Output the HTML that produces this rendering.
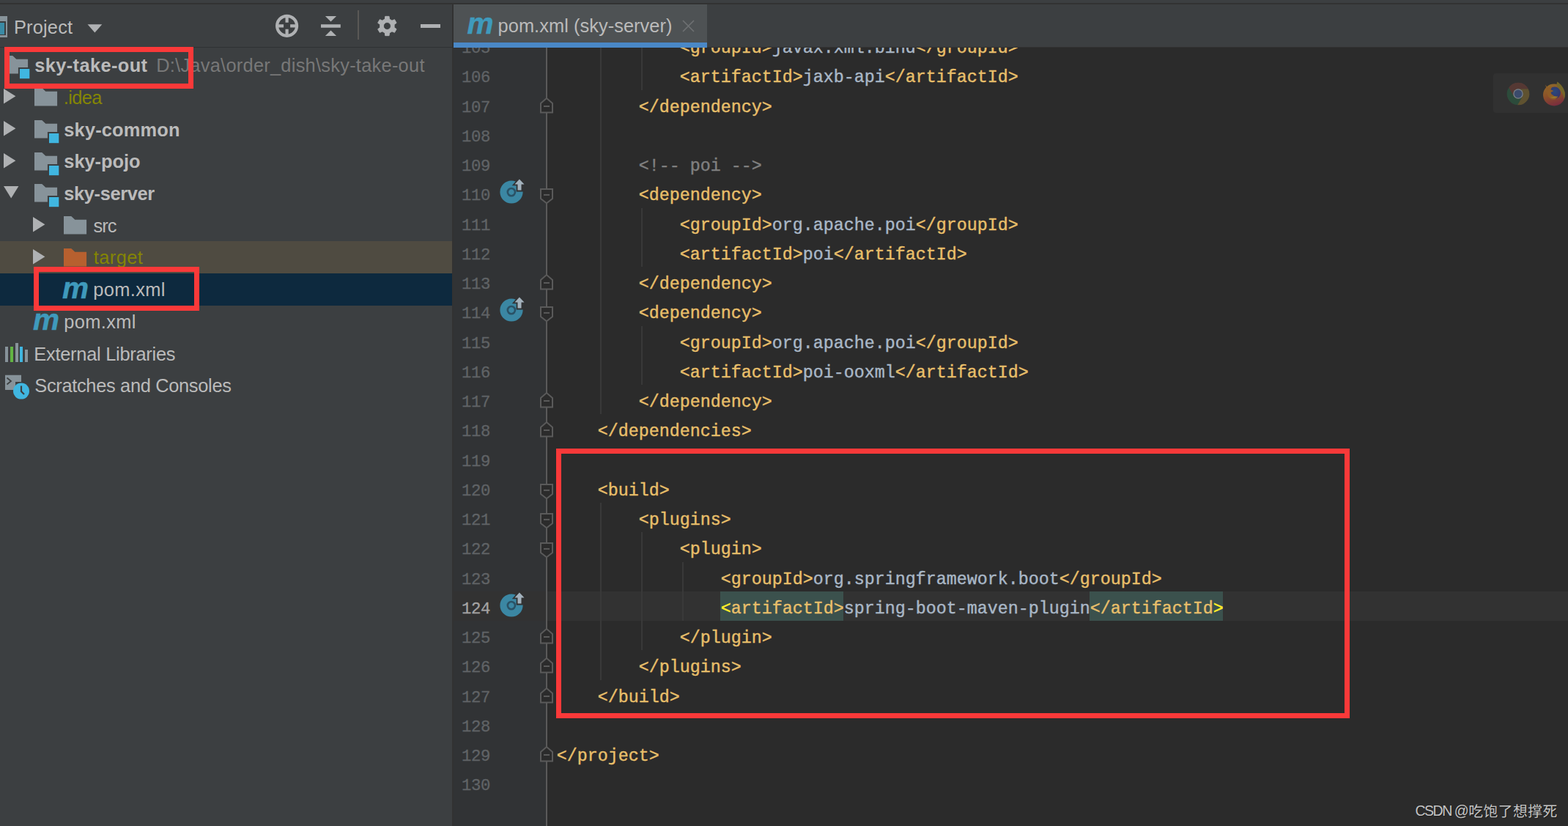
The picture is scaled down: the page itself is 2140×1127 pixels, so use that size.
<!DOCTYPE html>
<html lang="en"><head><meta charset="utf-8"><title>pom.xml (sky-server)</title>
<style>
*{margin:0;padding:0;box-sizing:border-box}
html,body{width:2140px;height:1127px;overflow:hidden;background:#2b2b2b}
body{position:relative;font-family:"Liberation Sans","Noto Sans CJK SC",sans-serif;color:#bbbbbb}
.abs{position:absolute}
#side{position:absolute;left:0;top:0;width:617px;height:1127px;background:#3c3f41;overflow:hidden}
#sepv{position:absolute;left:617.2px;top:6px;width:1.7px;height:1121px;background:#323232}
#topstrip{position:absolute;left:0;top:0;width:2140px;height:6px;background:#3c3f41}
#topline{position:absolute;left:0;top:4.1px;width:2140px;height:1.9px;background:#323232}
#tabbar{position:absolute;left:619px;top:6px;width:1521px;height:58px;background:#3c3f41}
#tabline{position:absolute;left:619px;top:63.6px;width:1521px;height:1.6px;background:#323232}
#tab{position:absolute;left:619px;top:6px;width:346px;height:59px;background:#4e5254}
#tabul{position:absolute;left:619px;top:58px;width:346px;height:7px;background:#4a88c7}
#hdrline{position:absolute;left:0;top:63.6px;width:617.5px;height:1.5px;background:#2f3133}
#gutter{position:absolute;left:619px;top:65px;width:128px;height:1062px;background:#313335}
#foldline{position:absolute;left:745px;top:65px;width:2px;height:1062px;background:#5a5a5a}
#editor{position:absolute;left:619px;top:65px;width:1521px;height:1062px;overflow:hidden}
.ln{position:absolute;left:12px;width:40px;text-align:left;font-family:"Liberation Mono", monospace;font-size:22.3px;letter-spacing:-0.4px;color:#606366;-webkit-text-stroke:0.3px currentColor;line-height:40.25px;height:40.25px;white-space:pre}
.cl{position:absolute;-webkit-text-stroke:0.4px currentColor;font-family:"Liberation Mono", monospace;font-size:23.33px;line-height:40.25px;height:40.25px;white-space:pre;color:#a9b7c6}
.t{color:#e8bf6a}.c{color:#808080}
.m{color:#e8bf6a}
.y{color:#ffef28}
.ig{position:absolute;width:2px;background:#393939}
.row{position:absolute;left:0;width:617px;height:43.8px}
.rt{position:absolute;font-size:25.4px;line-height:30px;white-space:pre;color:#bbbbbb}
.b{font-weight:bold}
.ol{color:#848504}
.gr{color:#787878}
.red{position:absolute;border:7px solid #fa3939}
svg{position:absolute;overflow:visible}
</style></head><body>

<div id="editor">
<div class="abs" style="left:0;top:742.00px;width:1521px;height:40px;background:#323232"></div>
<div class="abs" style="left:363.80px;top:742.00px;width:168.00px;height:40px;background:#3b514d"></div>
<div class="abs" style="left:867.80px;top:742.00px;width:182.00px;height:40px;background:#3b514d"></div>
</div>
<div id="gutter"></div>
<div class="abs" style="left:619px;top:807.00px;width:128px;height:40px;background:#323232"></div>
<div id="foldline"></div>
<div class="ig" style="left:819.0px;top:65.0px;height:500.0px"></div>
<div class="ig" style="left:875.0px;top:65.0px;height:58.0px"></div>
<div class="ig" style="left:875.0px;top:284.0px;height:80.0px"></div>
<div class="ig" style="left:875.0px;top:445.0px;height:80.0px"></div>
<div class="ig" style="left:819.0px;top:686.0px;height:242.0px"></div>
<div class="ig" style="left:875.0px;top:726.0px;height:161.0px"></div>
<div class="ig" style="left:931.0px;top:767.0px;height:80.0px"></div>
<div class="ln" style="left:630px;top:46.00px;">105</div>
<div class="cl" style="left:927.70px;top:46.00px"><span class="t">&lt;groupId&gt;</span>javax.xml.bind<span class="t">&lt;/groupId&gt;</span></div>
<div class="ln" style="left:630px;top:86.00px;">106</div>
<div class="cl" style="left:927.70px;top:86.00px"><span class="t">&lt;artifactId&gt;</span>jaxb-api<span class="t">&lt;/artifactId&gt;</span></div>
<div class="ln" style="left:630px;top:127.00px;">107</div>
<div class="cl" style="left:871.70px;top:127.00px"><span class="t">&lt;/dependency&gt;</span></div>
<div class="ln" style="left:630px;top:167.00px;">108</div>
<div class="ln" style="left:630px;top:207.00px;">109</div>
<div class="cl" style="left:871.70px;top:207.00px"><span class="c">&lt;!-- poi --&gt;</span></div>
<div class="ln" style="left:630px;top:247.00px;">110</div>
<div class="cl" style="left:871.70px;top:247.00px"><span class="t">&lt;dependency&gt;</span></div>
<div class="ln" style="left:630px;top:288.00px;">111</div>
<div class="cl" style="left:927.70px;top:288.00px"><span class="t">&lt;groupId&gt;</span>org.apache.poi<span class="t">&lt;/groupId&gt;</span></div>
<div class="ln" style="left:630px;top:328.00px;">112</div>
<div class="cl" style="left:927.70px;top:328.00px"><span class="t">&lt;artifactId&gt;</span>poi<span class="t">&lt;/artifactId&gt;</span></div>
<div class="ln" style="left:630px;top:368.00px;">113</div>
<div class="cl" style="left:871.70px;top:368.00px"><span class="t">&lt;/dependency&gt;</span></div>
<div class="ln" style="left:630px;top:408.00px;">114</div>
<div class="cl" style="left:871.70px;top:408.00px"><span class="t">&lt;dependency&gt;</span></div>
<div class="ln" style="left:630px;top:449.00px;">115</div>
<div class="cl" style="left:927.70px;top:449.00px"><span class="t">&lt;groupId&gt;</span>org.apache.poi<span class="t">&lt;/groupId&gt;</span></div>
<div class="ln" style="left:630px;top:489.00px;">116</div>
<div class="cl" style="left:927.70px;top:489.00px"><span class="t">&lt;artifactId&gt;</span>poi-ooxml<span class="t">&lt;/artifactId&gt;</span></div>
<div class="ln" style="left:630px;top:529.00px;">117</div>
<div class="cl" style="left:871.70px;top:529.00px"><span class="t">&lt;/dependency&gt;</span></div>
<div class="ln" style="left:630px;top:569.00px;">118</div>
<div class="cl" style="left:815.70px;top:569.00px"><span class="t">&lt;/dependencies&gt;</span></div>
<div class="ln" style="left:630px;top:610.00px;">119</div>
<div class="ln" style="left:630px;top:650.00px;">120</div>
<div class="cl" style="left:815.70px;top:650.00px"><span class="t">&lt;build&gt;</span></div>
<div class="ln" style="left:630px;top:690.00px;">121</div>
<div class="cl" style="left:871.70px;top:690.00px"><span class="t">&lt;plugins&gt;</span></div>
<div class="ln" style="left:630px;top:730.00px;">122</div>
<div class="cl" style="left:927.70px;top:730.00px"><span class="t">&lt;plugin&gt;</span></div>
<div class="ln" style="left:630px;top:771.00px;">123</div>
<div class="cl" style="left:983.70px;top:771.00px"><span class="t">&lt;groupId&gt;</span>org.springframework.boot<span class="t">&lt;/groupId&gt;</span></div>
<div class="ln" style="left:630px;top:811.00px;color:#a4a3a3;">124</div>
<div class="cl" style="left:983.70px;top:811.00px"><span class="m"><span class="y">&lt;</span>artifactId&gt;</span>spring-boot-maven-plugin<span class="m">&lt;/artifactId<span class="y">&gt;</span></span></div>
<div class="ln" style="left:630px;top:851.00px;">125</div>
<div class="cl" style="left:927.70px;top:851.00px"><span class="t">&lt;/plugin&gt;</span></div>
<div class="ln" style="left:630px;top:891.00px;">126</div>
<div class="cl" style="left:871.70px;top:891.00px"><span class="t">&lt;/plugins&gt;</span></div>
<div class="ln" style="left:630px;top:932.00px;">127</div>
<div class="cl" style="left:815.70px;top:932.00px"><span class="t">&lt;/build&gt;</span></div>
<div class="ln" style="left:630px;top:972.00px;">128</div>
<div class="ln" style="left:630px;top:1012.00px;">129</div>
<div class="cl" style="left:759.70px;top:1012.00px"><span class="t">&lt;/project&gt;</span></div>
<div class="ln" style="left:630px;top:1052.00px;">130</div>
<svg style="left:736px;top:243.00px" width="20" height="41" viewBox="-10 0 20 41"><path d="M-8 14.9H8V28L0 34.3L-8 28Z" fill="#2b2b2b" stroke="#5a5a5a" stroke-width="2" stroke-linejoin="miter"/><path d="M-4 22.9H4" stroke="#5a5a5a" stroke-width="2"/></svg>
<svg style="left:736px;top:404.00px" width="20" height="41" viewBox="-10 0 20 41"><path d="M-8 14.9H8V28L0 34.3L-8 28Z" fill="#2b2b2b" stroke="#5a5a5a" stroke-width="2" stroke-linejoin="miter"/><path d="M-4 22.9H4" stroke="#5a5a5a" stroke-width="2"/></svg>
<svg style="left:736px;top:646.00px" width="20" height="41" viewBox="-10 0 20 41"><path d="M-8 14.9H8V28L0 34.3L-8 28Z" fill="#2b2b2b" stroke="#5a5a5a" stroke-width="2" stroke-linejoin="miter"/><path d="M-4 22.9H4" stroke="#5a5a5a" stroke-width="2"/></svg>
<svg style="left:736px;top:686.00px" width="20" height="41" viewBox="-10 0 20 41"><path d="M-8 14.9H8V28L0 34.3L-8 28Z" fill="#2b2b2b" stroke="#5a5a5a" stroke-width="2" stroke-linejoin="miter"/><path d="M-4 22.9H4" stroke="#5a5a5a" stroke-width="2"/></svg>
<svg style="left:736px;top:726.00px" width="20" height="41" viewBox="-10 0 20 41"><path d="M-8 14.9H8V28L0 34.3L-8 28Z" fill="#2b2b2b" stroke="#5a5a5a" stroke-width="2" stroke-linejoin="miter"/><path d="M-4 22.9H4" stroke="#5a5a5a" stroke-width="2"/></svg>
<svg style="left:736px;top:123.00px" width="20" height="41" viewBox="-10 0 20 41"><path d="M-8 30.5H8V17.9L0 11.1L-8 17.9Z" fill="#2b2b2b" stroke="#5a5a5a" stroke-width="2" stroke-linejoin="miter"/><path d="M-4 22H4" stroke="#5a5a5a" stroke-width="2"/></svg>
<svg style="left:736px;top:364.00px" width="20" height="41" viewBox="-10 0 20 41"><path d="M-8 30.5H8V17.9L0 11.1L-8 17.9Z" fill="#2b2b2b" stroke="#5a5a5a" stroke-width="2" stroke-linejoin="miter"/><path d="M-4 22H4" stroke="#5a5a5a" stroke-width="2"/></svg>
<svg style="left:736px;top:525.00px" width="20" height="41" viewBox="-10 0 20 41"><path d="M-8 30.5H8V17.9L0 11.1L-8 17.9Z" fill="#2b2b2b" stroke="#5a5a5a" stroke-width="2" stroke-linejoin="miter"/><path d="M-4 22H4" stroke="#5a5a5a" stroke-width="2"/></svg>
<svg style="left:736px;top:565.00px" width="20" height="41" viewBox="-10 0 20 41"><path d="M-8 30.5H8V17.9L0 11.1L-8 17.9Z" fill="#2b2b2b" stroke="#5a5a5a" stroke-width="2" stroke-linejoin="miter"/><path d="M-4 22H4" stroke="#5a5a5a" stroke-width="2"/></svg>
<svg style="left:736px;top:847.00px" width="20" height="41" viewBox="-10 0 20 41"><path d="M-8 30.5H8V17.9L0 11.1L-8 17.9Z" fill="#2b2b2b" stroke="#5a5a5a" stroke-width="2" stroke-linejoin="miter"/><path d="M-4 22H4" stroke="#5a5a5a" stroke-width="2"/></svg>
<svg style="left:736px;top:887.00px" width="20" height="41" viewBox="-10 0 20 41"><path d="M-8 30.5H8V17.9L0 11.1L-8 17.9Z" fill="#2b2b2b" stroke="#5a5a5a" stroke-width="2" stroke-linejoin="miter"/><path d="M-4 22H4" stroke="#5a5a5a" stroke-width="2"/></svg>
<svg style="left:736px;top:928.00px" width="20" height="41" viewBox="-10 0 20 41"><path d="M-8 30.5H8V17.9L0 11.1L-8 17.9Z" fill="#2b2b2b" stroke="#5a5a5a" stroke-width="2" stroke-linejoin="miter"/><path d="M-4 22H4" stroke="#5a5a5a" stroke-width="2"/></svg>
<svg style="left:736px;top:1008.00px" width="20" height="41" viewBox="-10 0 20 41"><path d="M-8 30.5H8V17.9L0 11.1L-8 17.9Z" fill="#2b2b2b" stroke="#5a5a5a" stroke-width="2" stroke-linejoin="miter"/><path d="M-4 22H4" stroke="#5a5a5a" stroke-width="2"/></svg>
<svg style="left:677.6px;top:242.40px" width="40" height="40" viewBox="-20 -20 40 40"><circle cx="0" cy="0" r="15.6" fill="#3b87a3"/><rect x="6.8" y="-19" width="12" height="18.4" fill="#313335"/><path d="M10.9 -17.6L17.5 -10.4H13.5V-2.5H8.5V-10.4H4.5Z" fill="#313335" stroke="#313335" stroke-width="3.4" stroke-linejoin="miter"/><circle cx="-0.1" cy="0.1" r="5.1" fill="none" stroke="#2a5266" stroke-width="2.6"/><path d="M10.9 -17.6L17.5 -10.4H13.5V-2.5H8.5V-10.4H4.5Z" fill="#a3b2bd"/></svg>
<svg style="left:677.6px;top:403.40px" width="40" height="40" viewBox="-20 -20 40 40"><circle cx="0" cy="0" r="15.6" fill="#3b87a3"/><rect x="6.8" y="-19" width="12" height="18.4" fill="#313335"/><path d="M10.9 -17.6L17.5 -10.4H13.5V-2.5H8.5V-10.4H4.5Z" fill="#313335" stroke="#313335" stroke-width="3.4" stroke-linejoin="miter"/><circle cx="-0.1" cy="0.1" r="5.1" fill="none" stroke="#2a5266" stroke-width="2.6"/><path d="M10.9 -17.6L17.5 -10.4H13.5V-2.5H8.5V-10.4H4.5Z" fill="#a3b2bd"/></svg>
<svg style="left:677.6px;top:806.40px" width="40" height="40" viewBox="-20 -20 40 40"><circle cx="0" cy="0" r="15.6" fill="#3b87a3"/><rect x="6.8" y="-19" width="12" height="18.4" fill="#323232"/><path d="M10.9 -17.6L17.5 -10.4H13.5V-2.5H8.5V-10.4H4.5Z" fill="#323232" stroke="#323232" stroke-width="3.4" stroke-linejoin="miter"/><circle cx="-0.1" cy="0.1" r="5.1" fill="none" stroke="#2a5266" stroke-width="2.6"/><path d="M10.9 -17.6L17.5 -10.4H13.5V-2.5H8.5V-10.4H4.5Z" fill="#a3b2bd"/></svg>
<div class="red" style="left:759px;top:612px;width:1083px;height:368px"></div>
<div id="side">
</div>
<div id="sepv"></div>
<div id="tabbar"></div><div id="tabline"></div><div id="tab"></div><div id="tabul"></div>
<div id="topstrip"></div><div id="topline"></div><div id="hdrline"></div>
<div class="abs" style="left:637.5px;top:11.45px;font-size:40.5px;line-height:42px;font-weight:bold;font-style:italic;color:#3f9abc;-webkit-text-stroke:0.5px #3f9abc;font-family:'Liberation Sans',sans-serif">m</div>
<div class="rt" style="left:679.6px;top:20px;letter-spacing:0.045px">pom.xml (sky-server)</div>
<svg style="left:931px;top:27px" width="17" height="17" viewBox="0 0 17 17"><path d="M1 1L16 16M16 1L1 16" stroke="#6e7173" stroke-width="1.6" fill="none"/></svg>
<div class="abs" style="left:0;top:22.1px;width:10.1px;height:28.9px;background:#87939a"></div><div class="abs" style="left:0;top:29.1px;width:7.5px;height:18.7px;background:#3a3d3f"></div><div class="abs" style="left:0;top:30.6px;width:5.6px;height:16px;background:#3a8ba5"></div>
<div class="rt" style="left:18.9px;top:22.3px;letter-spacing:0.2px">Project</div>
<svg style="left:119px;top:32.8px" width="22" height="12" viewBox="0 0 22 12"><path d="M0.5 0.3H20.3L10.4 11.5Z" fill="#afb1b3"/></svg>
<svg style="left:374px;top:18px" width="36" height="36" viewBox="-18 -18 36 36"><g transform="translate(-0.4,-0.7)"><circle r="13.5" fill="none" stroke="#afb1b3" stroke-width="4.2"/><path d="M0 -14V-4.5M0 14V4.5M-14 0H-4.5M14 0H4.5" stroke="#afb1b3" stroke-width="4.2" fill="none"/></g></svg>
<svg style="left:436px;top:20px" width="32" height="32" viewBox="0 0 32 32"><path d="M2 13.2H28.8V17.7H2Z M7.9 2.1H23.1L15.5 9.6Z M7.9 29H23.1L15.5 21.6Z" fill="#afb1b3"/></svg>
<div class="abs" style="left:488px;top:14px;width:2px;height:40px;background:#5a5855"></div>
<svg style="left:510px;top:17px" width="38" height="38" viewBox="0 0 38 38"><path d="M15.34 9.08L15.75 5.36L21.05 5.36L21.46 9.08L25.02 11.14L28.45 9.64L31.10 14.23L28.08 16.44L28.08 20.56L31.10 22.77L28.45 27.36L25.02 25.86L21.46 27.92L21.05 31.64L15.75 31.64L15.34 27.92L11.78 25.86L8.35 27.36L5.70 22.77L8.72 20.56L8.72 16.44L5.70 14.23L8.35 9.64L11.78 11.14ZM23.40 18.50A5.0 5.0 0 1 0 13.40 18.50A5.0 5.0 0 1 0 23.40 18.50Z" fill="#afb1b3" fill-rule="evenodd" stroke="#afb1b3" stroke-width="1" stroke-linejoin="round"/></svg>
<div class="abs" style="left:574px;top:33px;width:27px;height:5px;background:#afb1b3"></div>
<div class="row" style="top:328.8px;background:#4f4b41"></div>
<div class="row" style="top:372.6px;background:#0d293e;height:44.2px"></div>
<svg style="left:7px;top:75.6px" width="36" height="34" viewBox="0 0 36 34"><path d="M0 0H9.2C10.4 0 10.8 0.5 11.6 1.3L15.3 4.8H31.1V24.6H0Z" fill="#87939a"/><rect x="17.9" y="16" width="17" height="17" fill="#3c3f41"/><rect x="20" y="18" width="13.3" height="13.2" fill="#40b6e0"/></svg>
<div class="rt b" style="left:47.2px;top:74.2px;letter-spacing:0.386px">sky-take-out</div>
<div class="rt gr" style="left:213.2px;top:74.2px;letter-spacing:0.26px">D:\Java\order_dish\sky-take-out</div>
<svg style="left:4.8px;top:121.2px" width="18" height="22" viewBox="0 0 18 22"><path d="M0 0L16.4 10.2L0 20.4Z" fill="#afb1b3"/></svg>
<svg style="left:47px;top:120.2px" width="36" height="34" viewBox="0 0 36 34"><path d="M0 0H9.2C10.4 0 10.8 0.5 11.6 1.3L15.3 4.8H31.1V24.6H0Z" fill="#87939a"/></svg>
<div class="rt ol" style="left:86.8px;top:117.9px;letter-spacing:-0.65px">.idea</div>
<svg style="left:4.8px;top:164.9px" width="18" height="22" viewBox="0 0 18 22"><path d="M0 0L16.4 10.2L0 20.4Z" fill="#afb1b3"/></svg>
<svg style="left:47px;top:163.9px" width="36" height="34" viewBox="0 0 36 34"><path d="M0 0H9.2C10.4 0 10.8 0.5 11.6 1.3L15.3 4.8H31.1V24.6H0Z" fill="#87939a"/><rect x="17.9" y="16" width="17" height="17" fill="#3c3f41"/><rect x="20" y="18" width="13.3" height="13.2" fill="#40b6e0"/></svg>
<div class="rt b" style="left:87.3px;top:161.6px;letter-spacing:0.17px">sky-common</div>
<svg style="left:4.8px;top:208.6px" width="18" height="22" viewBox="0 0 18 22"><path d="M0 0L16.4 10.2L0 20.4Z" fill="#afb1b3"/></svg>
<svg style="left:47px;top:207.6px" width="36" height="34" viewBox="0 0 36 34"><path d="M0 0H9.2C10.4 0 10.8 0.5 11.6 1.3L15.3 4.8H31.1V24.6H0Z" fill="#87939a"/><rect x="17.9" y="16" width="17" height="17" fill="#3c3f41"/><rect x="20" y="18" width="13.3" height="13.2" fill="#40b6e0"/></svg>
<div class="rt b" style="left:87.3px;top:205.3px;letter-spacing:-0.027px">sky-pojo</div>
<svg style="left:4.8px;top:254.3px" width="22" height="18" viewBox="0 0 22 18"><path d="M0 0H20.4L10.2 16.4Z" fill="#afb1b3"/></svg>
<svg style="left:47px;top:251.3px" width="36" height="34" viewBox="0 0 36 34"><path d="M0 0H9.2C10.4 0 10.8 0.5 11.6 1.3L15.3 4.8H31.1V24.6H0Z" fill="#87939a"/><rect x="17.9" y="16" width="17" height="17" fill="#3c3f41"/><rect x="20" y="18" width="13.3" height="13.2" fill="#40b6e0"/></svg>
<div class="rt b" style="left:87.3px;top:249.0px;letter-spacing:-0.36px">sky-server</div>
<svg style="left:45px;top:296.0px" width="18" height="22" viewBox="0 0 18 22"><path d="M0 0L16.4 10.2L0 20.4Z" fill="#afb1b3"/></svg>
<svg style="left:87px;top:295.0px" width="36" height="34" viewBox="0 0 36 34"><path d="M0 0H9.2C10.4 0 10.8 0.5 11.6 1.3L15.3 4.8H31.1V24.6H0Z" fill="#87939a"/></svg>
<div class="rt " style="left:127.5px;top:292.7px;letter-spacing:-1.0px">src</div>
<svg style="left:45px;top:339.7px" width="18" height="22" viewBox="0 0 18 22"><path d="M0 0L16.4 10.2L0 20.4Z" fill="#afb1b3"/></svg>
<svg style="left:87px;top:338.7px" width="36" height="34" viewBox="0 0 36 34"><path d="M0 0H9.2C10.4 0 10.8 0.5 11.6 1.3L15.3 4.8H31.1V24.6H0Z" fill="#b7602f"/></svg>
<div class="rt ol" style="left:127.8px;top:336.4px;letter-spacing:0.44px">target</div>
<div class="abs" style="left:85px;top:371.7px;font-size:40.5px;line-height:42px;font-weight:bold;font-style:italic;color:#3f9abc;-webkit-text-stroke:0.5px #3f9abc;letter-spacing:0">m</div>
<div class="rt " style="left:127.3px;top:380.1px;letter-spacing:0.37px">pom.xml</div>
<div class="abs" style="left:45px;top:415.4px;font-size:40.5px;line-height:42px;font-weight:bold;font-style:italic;color:#3f9abc;-webkit-text-stroke:0.5px #3f9abc;letter-spacing:0">m</div>
<div class="rt " style="left:87.3px;top:423.8px;letter-spacing:0.37px">pom.xml</div>
<div class="abs" style="left:7.1px;top:472.6px;width:4.4px;height:21.8px;background:#87939a"></div>
<div class="abs" style="left:13.8px;top:472.6px;width:4.4px;height:21.8px;background:#62b543"></div>
<div class="abs" style="left:20.6px;top:467.9px;width:4.4px;height:26.5px;background:#87939a"></div>
<div class="abs" style="left:27px;top:472.6px;width:4.4px;height:21.8px;background:#40b6e0"></div>
<div class="abs" style="left:33.7px;top:477.2px;width:4.4px;height:17.2px;background:#87939a"></div>
<div class="rt " style="left:46.3px;top:467.5px;letter-spacing:-0.256px">External Libraries</div>
<svg style="left:7px;top:511px" width="36" height="36" viewBox="0 0 36 36"><path d="M0 0.7H22V10H14V21H0Z" fill="#87939a"/><path d="M2.5 4.5L8 9L2.5 13.5" stroke="#3c3f41" stroke-width="1.8" fill="none"/><circle cx="22" cy="22.6" r="11" fill="#40b6e0"/><path d="M22 15.5V23L26 27" stroke="#3c3f41" stroke-width="2.2" fill="none"/></svg>
<div class="rt " style="left:47.3px;top:511.2px;letter-spacing:-0.316px">Scratches and Consoles</div>
<div class="red" style="left:6px;top:64px;width:258px;height:57px"></div>
<div class="red" style="left:46px;top:364px;width:226px;height:60px"></div>
<div class="abs" style="left:2038px;top:100px;width:110px;height:54.3px;border-radius:4px;background:#313131"></div>
<svg style="left:2051.6px;top:108.3px" width="40" height="40" viewBox="-20.4 -20.4 40.8 40.8">
<circle r="15.3" fill="#4a4a42"/>
<path d="M0 -6.9L13.99 -6.9A15.6 15.6 0 0 1 -1.02 15.57L5.975 3.45A6.9 6.9 0 0 0 0 -6.9Z" fill="#5f5230"/>
<path d="M0 -6.9L13.99 -6.9A15.6 15.6 0 0 1 -1.02 15.57L5.975 3.45A6.9 6.9 0 0 0 0 -6.9Z" fill="#2c4b3b" transform="rotate(120)"/>
<path d="M0 -6.9L13.99 -6.9A15.6 15.6 0 0 1 -1.02 15.57L5.975 3.45A6.9 6.9 0 0 0 0 -6.9Z" fill="#553833" transform="rotate(-120)"/>
<circle r="6.9" fill="#7b8187"/><circle r="5.6" fill="#3b4b6c"/></svg>
<svg style="left:2100.8px;top:109px" width="40" height="40" viewBox="-20 -20 40 40">
<defs><linearGradient id="fxg" x1="0.2" y1="0" x2="0.5" y2="1"><stop offset="0" stop-color="#8f6a2a"/><stop offset="0.5" stop-color="#8c5128"/><stop offset="1" stop-color="#7a2d3e"/></linearGradient>
<radialGradient id="fxb" cx="0.5" cy="0.4" r="0.6"><stop offset="0" stop-color="#2a4a7c"/><stop offset="1" stop-color="#35336a"/></radialGradient></defs>
<circle cx="0" cy="0.5" r="15" fill="url(#fxg)"/>
<circle cx="0.8" cy="-2.4" r="8.2" fill="url(#fxb)"/>
<path d="M-12 -13.5L-8.5 -9L-3 -10.5L-4.5 -6.5L-0.5 -5L-4.5 -3L-3.5 -0.5L-0.5 1.5C0.5 3.5 3 3.5 5.5 2C4 6.5 -1 8 -5 5.5C-9 3 -10 -2 -9.5 -6Z" fill="#8e5c27"/>
<path d="M-5 3.5C-2 5.5 2 5 4.5 3L1 2.2C-1 3.2 -3 3.2 -5 3.5Z" fill="#9a7a2a"/>
<path d="M4.5 -17.5C9.5 -14 13.5 -9 14.8 -2.5C15.3 1 14.5 4 13.5 6C12.5 0 10.5 -4 7 -7.5C4 -10.5 2.5 -13.5 4.5 -17.5Z" fill="#74662a"/>
</svg>
<div class="abs" style="left:1931.5px;top:1093px;line-height:26px;height:26px;color:#c4c4c4;white-space:pre;font-family:'Liberation Sans','Noto Sans CJK SC',sans-serif;text-shadow:1px 1px 0 rgba(0,0,0,0.35)"><span style="font-size:19.6px;letter-spacing:-1.55px">CSDN @</span><span style="font-size:19.8px;letter-spacing:0.45px;position:relative;top:1.4px;left:1.2px">吃饱了想撑死</span></div>
</body></html>
